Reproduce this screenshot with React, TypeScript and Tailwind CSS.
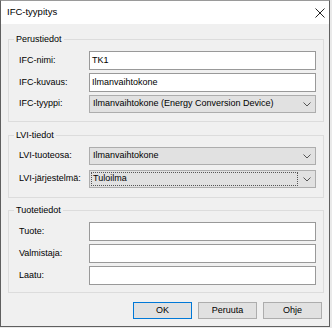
import React from "react";

const font = { fontFamily: '"Liberation Sans", Arial, sans-serif' };

function Chevron() {
  return (
    <svg width="8" height="5" viewBox="0 0 8 5" className="shrink-0">
      <path d="M0.5 0.5 L4 4 L7.5 0.5" fill="none" stroke="#555" strokeWidth="1" />
    </svg>
  );
}

function TextRow({ label, value }: { label: string; value?: string }) {
  return (
    <div className="flex items-center">
      <span className="w-[70px] shrink-0">{label}</span>
      <div className="flex h-[19px] flex-1 items-center border border-[#999] bg-white pl-[2px]">
        {value}
      </div>
    </div>
  );
}

function ComboRow({ label, value, focused }: { label: string; value: string; focused?: boolean }) {
  return (
    <div className="flex items-center">
      <span className="w-[70px] shrink-0">{label}</span>
      <div className="flex h-[18px] flex-1 items-center border border-[#adadad] bg-[#e1e1e1] pl-[1px] pr-[4px]">
        <div
          className={
            focused
              ? "flex h-[14px] flex-1 items-center border border-dotted border-[#555] pl-[1px]"
              : "flex h-[14px] flex-1 items-center pl-[2px]"
          }
        >
          {value}
        </div>
        <div className="ml-[5px] flex w-[8px] justify-center">
          <Chevron />
        </div>
      </div>
    </div>
  );
}

function GroupBox({ title, className, children }: { title: string; className: string; children: React.ReactNode }) {
  return (
    <div className={"relative ml-[7px] mr-[5px] border border-[#dcdcdc] pl-[10px] pr-[7px] " + className}>
      <span className="absolute left-[5px] top-[-7px] bg-[#f0f0f0] px-[2px] leading-[12px]">{title}</span>
      {children}
    </div>
  );
}

function Button({ label, primary }: { label: string; primary?: boolean }) {
  return (
    <div
      className={
        "flex h-[17px] w-[59px] items-center justify-center border bg-[#e1e1e1] " +
        (primary ? "border-[#0078d7]" : "border-[#adadad]")
      }
    >
      {label}
    </div>
  );
}

export default function App() {
  return (
    <div className="h-[328px] w-[332px] bg-[#e9e9e9] text-[9px] text-black" style={font}>
      <div className="flex h-[327px] w-[330px] flex-col border border-[#5f5f5f] border-t-[#9a9a9a] bg-[#f0f0f0]">
        <div className="flex h-[23px] shrink-0 items-center justify-between bg-white pl-[6px] pr-[4px]">
          <span className="text-[9.5px]">IFC-tyypitys</span>
          <svg width="10" height="10" viewBox="0 0 10 10">
            <path d="M0.5 0.5 L9.5 9.5 M9.5 0.5 L0.5 9.5" stroke="#222" strokeWidth="1" />
          </svg>
        </div>

        <GroupBox title="Perustiedot" className="mt-[15px] pb-[8px] pt-[11px]">
          <div className="flex flex-col gap-[3px]">
            <TextRow label="IFC-nimi:" value="TK1" />
            <TextRow label="IFC-kuvaus:" value="Ilmanvaihtokone" />
            <ComboRow label="IFC-tyyppi:" value="Ilmanvaihtokone (Energy Conversion Device)" />
          </div>
        </GroupBox>

        <GroupBox title="LVI-tiedot" className="mt-[13px] pb-[9px] pt-[11px]">
          <div className="flex flex-col gap-[5px]">
            <ComboRow label="LVI-tuoteosa:" value="Ilmanvaihtokone" />
            <ComboRow label="LVI-järjestelmä:" value="Tuloilma" focused />
          </div>
        </GroupBox>

        <GroupBox title="Tuotetiedot" className="mt-[12px] pb-[7px] pt-[11px]">
          <div className="flex flex-col gap-[3px]">
            <TextRow label="Tuote:" />
            <TextRow label="Valmistaja:" />
            <TextRow label="Laatu:" />
          </div>
        </GroupBox>

        <div className="mr-[7px] mt-[9px] flex justify-end gap-[6px]">
          <Button label="OK" primary />
          <Button label="Peruuta" />
          <Button label="Ohje" />
        </div>
      </div>
    </div>
  );
}
